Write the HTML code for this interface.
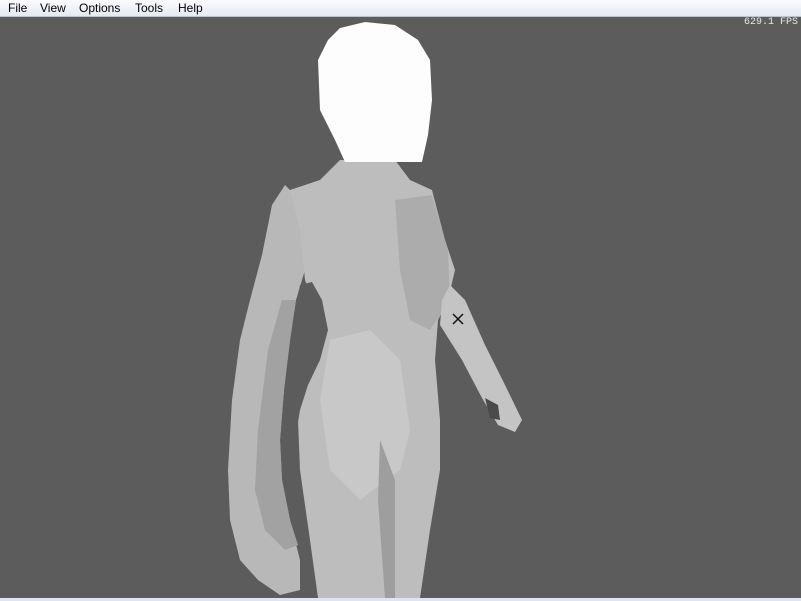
<!DOCTYPE html>
<html><head><style>
html,body{margin:0;padding:0;width:801px;height:601px;overflow:hidden;background:#5c5c5c;font-family:"Liberation Sans",sans-serif}
#menu{position:absolute;left:0;top:0;width:801px;height:16px;background:linear-gradient(#fbfcfe,#e4e9f2);border-bottom:1px solid #b9c3d3;font-size:12px}
#menu span{position:absolute;top:1px;color:#000}
#fps{position:absolute;right:3px;top:17px;color:#e8e8e8;font:10px "Liberation Mono",monospace}
#bot{position:absolute;left:0;top:598px;width:801px;height:3px;background:#dfe5ee}
svg{position:absolute;left:0;top:0}
</style></head><body>
<svg width="801" height="601">
<!-- left arm -->
<polygon fill="#b8b8b8" points="285,185 300,200 305,270 296,300 290,340 284,390 280,440 282,480 290,520 300,560 300,590 280,595 258,580 240,560 230,520 228,470 232,400 240,340 250,300 262,255 272,205"/>
<polygon fill="#a2a2a2" points="296,300 290,340 284,390 280,440 282,480 290,520 298,545 285,550 265,530 255,490 258,430 268,350 282,300"/>
<!-- body -->
<polygon fill="#bdbdbd" points="340,160 395,160 410,180 432,190 445,240 455,270 448,300 438,320 435,360 440,420 440,470 430,530 420,598 318,598 310,540 300,470 298,420 305,380 315,350 320,320 305,280 300,230 290,190 320,180"/>
<polygon fill="#acacac" points="395,200 432,195 448,250 450,300 430,330 410,320 400,270"/>
<polygon fill="#c8c8c8" points="330,340 370,330 400,360 410,430 400,470 360,500 330,470 320,400"/>
<polygon fill="#9e9e9e" points="380,440 395,480 395,598 385,598 378,500"/>
<!-- gap between arm and torso -->
<polygon fill="#5c5c5c" points="300,285 312,282 322,300 328,330 320,360 308,385 300,410 295,440 288,450 284,420 288,370 293,320"/>
<!-- right arm -->
<polygon fill="#c4c4c4" points="450,285 465,300 485,345 505,385 522,420 515,432 498,425 482,398 462,360 440,325 442,300"/>
<polygon fill="#4a4a4a" points="485,398 498,405 500,420 490,418"/>
<!-- head -->
<polygon fill="#fdfdfd" points="340,28 365,22 395,25 418,40 430,60 432,100 428,135 422,162 345,162 335,140 320,110 318,60 328,40"/>
<!-- cursor -->
<path d="M453,314 l10,10 M463,314 l-10,10" stroke="#111" stroke-width="1.5"/>
</svg>
<div id="menu"><span style="left:8px">File</span><span style="left:40px">View</span><span style="left:79px">Options</span><span style="left:135px">Tools</span><span style="left:178px">Help</span></div>
<div id="fps">629.1 FPS</div>
<div id="bot"></div>
</body></html>
